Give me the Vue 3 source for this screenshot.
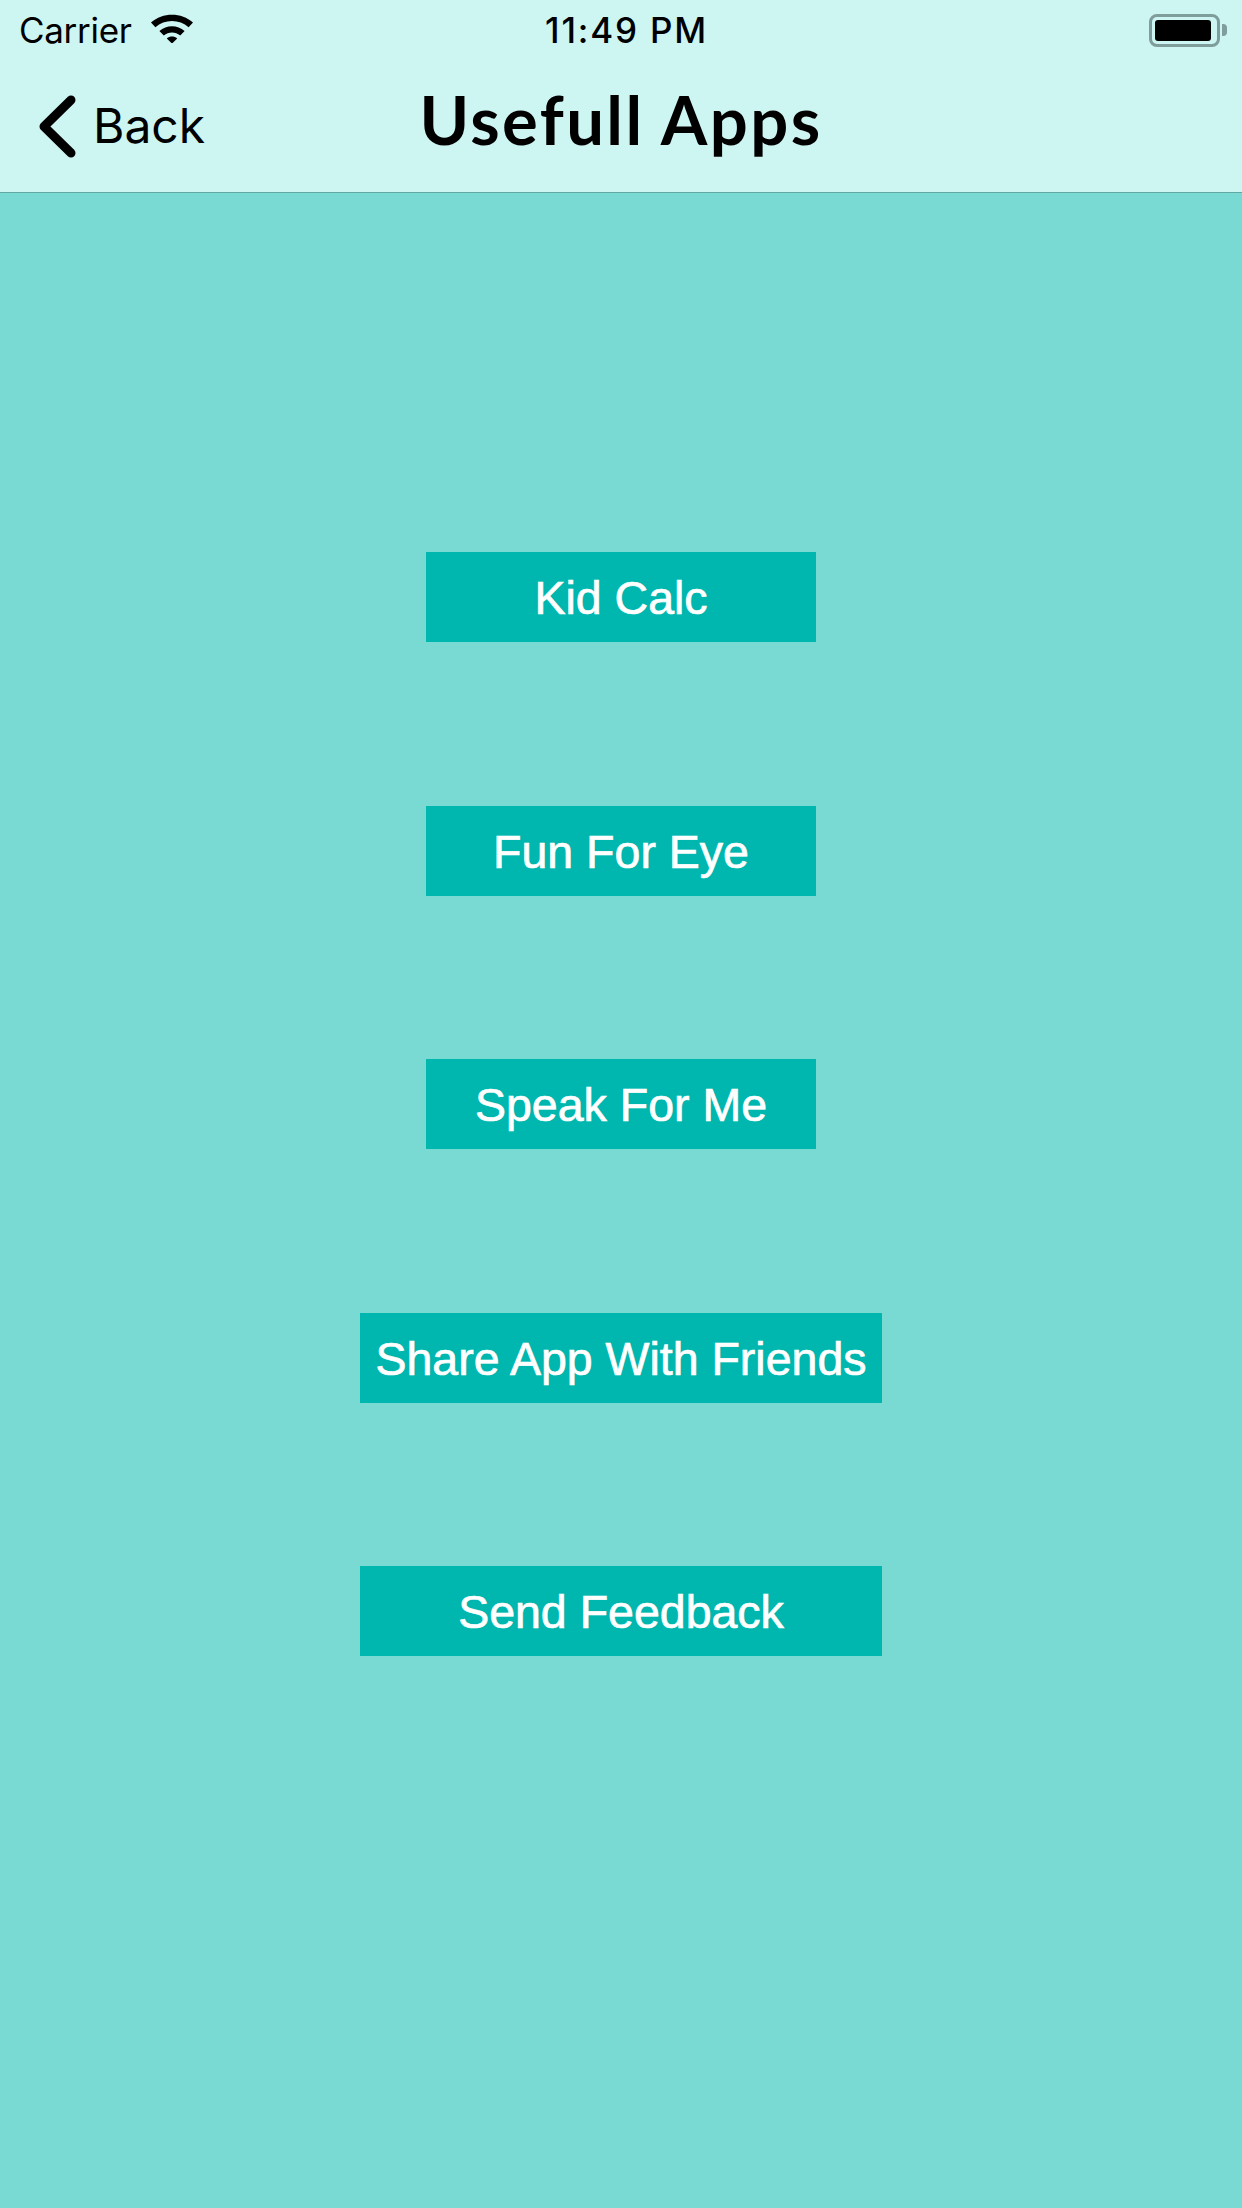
<template>
  <div class="screen">
    <header class="topbar">
      <div class="status">
        <div class="status-left">
          <span class="carrier">Carrier</span>
          <svg class="wifi" width="44" height="32" viewBox="0 0 44 32">
            <path d="M1 11.5 C12.5 1 31.5 1 43 11.5 L38.6 16.2 C29.5 8 14.5 8 5.4 16.2 Z" />
            <path d="M9.4 20 C16.5 13.6 27.5 13.6 34.6 20 L30.2 24.6 C25.5 20.6 18.5 20.6 13.8 24.6 Z" />
            <path d="M16.8 27.4 C19.8 25 24.2 25 27.2 27.4 L22 32.6 Z" />
          </svg>
        </div>
        <span class="time">11:49 PM</span>
        <div class="battery">
          <div class="battery-body"><div class="battery-level"></div></div>
          <div class="battery-cap"></div>
        </div>
      </div>
      <nav class="navbar">
        <a class="back">
          <svg class="chevron" width="38" height="64" viewBox="0 0 38 64">
            <path d="M32 5 L5 31.5 L32 58" fill="none" stroke="#000" stroke-width="9" stroke-linecap="round" stroke-linejoin="round" />
          </svg>
          <span class="back-label">Back</span>
        </a>
        <h1 class="title">Usefull Apps</h1>
      </nav>
    </header>

    <main class="menu">
      <button
        v-for="item in items"
        :key="item.label"
        class="menu-btn"
        :class="{ wide: item.wide }"
      >
        {{ item.label }}
      </button>
    </main>
  </div>
</template>

<script setup>
const items = [
  { label: "Kid Calc" },
  { label: "Fun For Eye" },
  { label: "Speak For Me" },
  { label: "Share App With Friends", wide: true },
  { label: "Send Feedback", wide: true },
];
</script>

<style>
html,
body {
  margin: 0;
  padding: 0;
}
</style>

<style scoped>
.screen {
  width: 1242px;
  height: 2208px;
  background: #78dad3;
  display: flex;
  flex-direction: column;
  overflow: hidden;
}
.topbar {
  height: 192px;
  background: #cdf6f3;
  border-bottom: 1px solid #5fa8a3;
  box-sizing: content-box;
  color: #000;
}
.status {
  height: 60px;
  display: grid;
  grid-template-columns: 1fr auto 1fr;
  align-items: center;
  padding: 0 15px 0 19px;
  font-family: Inter, "Liberation Sans", sans-serif;
}
.status-left {
  display: flex;
  align-items: center;
  gap: 18px;
}
.carrier {
  font-size: 35px;
  letter-spacing: -0.3px;
}
.wifi {
  fill: #000;
  margin-top: -6px;
}
.time {
  font-size: 35px;
  font-weight: 500;
  letter-spacing: 1.8px;
  margin-left: 7px;
}
.battery {
  justify-self: end;
  display: flex;
  align-items: center;
  gap: 2px;
}
.battery-body {
  width: 71px;
  height: 33px;
  box-sizing: border-box;
  border: 3px solid #7f9d9b;
  border-radius: 8px;
  padding: 3px;
}
.battery-level {
  width: 56px;
  height: 100%;
  background: #000;
  border-radius: 3px;
}
.battery-cap {
  width: 5px;
  height: 12px;
  background: #7f9d9b;
  border-radius: 0 4px 4px 0;
}
.navbar {
  height: 132px;
  display: flex;
  align-items: center;
  justify-content: center;
  position: relative;
}
.back {
  position: absolute;
  left: 39px;
  top: 35px;
  display: flex;
  align-items: center;
  gap: 16px;
  font-family: Inter, "Liberation Sans", sans-serif;
  font-size: 48px;
}
.back-label {
  margin-top: -3px;
}
.title {
  margin: 0 0 14px;
  font-family: "Lato", "Open Sans", sans-serif;
  font-size: 67px;
  font-weight: 700;
  letter-spacing: 2.4px;
}
.menu {
  display: flex;
  flex-direction: column;
  align-items: center;
  gap: 163.5px;
  padding-top: 359px;
}
.menu-btn {
  width: 390px;
  height: 90px;
  padding: 2px 0 0;
  border: 0;
  background: #00b7af;
  color: #fff;
  font-family: "Liberation Sans", Arial, sans-serif;
  font-size: 46.5px;
  -webkit-text-stroke: 0.7px #fff;
}
.menu-btn.wide {
  width: 522px;
}
</style>
